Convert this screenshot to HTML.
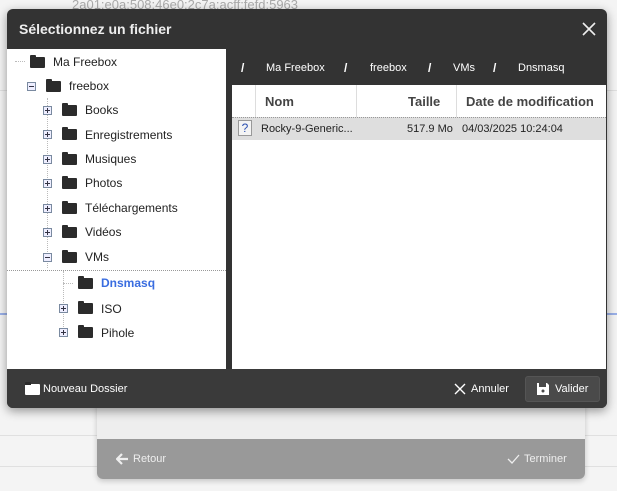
<!DOCTYPE html>
<html><head><meta charset="utf-8"><style>
*{margin:0;padding:0;box-sizing:border-box}
body{width:617px;height:491px;overflow:hidden;background:#f4f4f4;font-family:"Liberation Sans",sans-serif;position:relative}
.a{position:absolute}
.t{font-size:12px;color:#222;white-space:nowrap}
.f{position:absolute;width:15px;height:11px;background:#2b2b2b;border-radius:1px}
.f:before{content:"";position:absolute;left:0;top:-2px;width:6px;height:3px;background:#2b2b2b;border-radius:1px 1px 0 0}
.x{position:absolute;width:9px;height:9px;border:1px solid #7a8aa0;background:#eef;font-size:0}
.x:before{content:"";position:absolute;left:1px;top:3px;width:5px;height:1px;background:#334}
.x.p:after{content:"";position:absolute;left:3px;top:1px;width:1px;height:5px;background:#334}
.w{color:#fff;font-size:12px;white-space:nowrap}
</style></head><body>
<div class="a" style="left:72px;top:-3px;color:#aaa;font-size:13px">2a01:e0a:508:46e0:2c7a:acff:fefd:5963</div>
<div class="a" style="left:0;top:90px;width:617px;height:1px;background:#e0e0e0"></div>
<div class="a" style="left:0;top:313px;width:617px;height:2px;background:#9ab0e8"></div>
<div class="a" style="left:0;top:435px;width:617px;height:1px;background:#e0e0e0"></div>
<div class="a" style="left:0;top:466px;width:617px;height:1px;background:#e0e0e0"></div>
<div class="a" style="left:97px;top:400px;width:488px;height:79px;background:#eee;border-radius:0 0 6px 6px;box-shadow:0 2px 6px rgba(0,0,0,.2)"></div>
<div class="a" style="left:97px;top:439px;width:488px;height:40px;background:#999;border-radius:0 0 6px 6px"></div>
<svg class="a" style="left:116px;top:453px" width="13" height="12"><path d="M6 1L1 6L6 11M1 6H12" stroke="#eee" stroke-width="2.2" fill="none"/></svg>
<div class="a w" style="left:133px;top:453px;color:#eee;font-size:11px">Retour</div>
<svg class="a" style="left:507px;top:453px" width="13" height="12"><path d="M1 6L5 10L12 2" stroke="#eee" stroke-width="1.3" fill="none"/></svg>
<div class="a w" style="left:524px;top:453px;color:#eee;font-size:11px">Terminer</div>

<div class="a" style="left:7px;top:9px;width:600px;height:399px;background:#333;border-radius:6px;box-shadow:0 3px 10px rgba(0,0,0,.4)"></div>
<div class="a" style="left:19px;top:21px;color:#eee;font-size:14px;font-weight:bold">Sélectionnez un fichier</div>
<svg class="a" style="left:581px;top:21px" width="16" height="16"><path d="M2 2L14 14M14 2L2 14" stroke="#eee" stroke-width="1.6"/></svg>

<div class="a" style="left:7px;top:49px;width:219px;height:320px;background:#fff"></div>
<div class="a" style="left:232px;top:85px;width:374px;height:284px;background:#fff"></div>
<div class="a" style="left:232px;top:49px;width:374px;height:36px;background:#333"></div>
<div class="a w" style="left:241px;top:61px;font-weight:bold">/</div>
<div class="a w" style="left:266px;top:62px;font-size:11px">Ma Freebox</div>
<div class="a w" style="left:344px;top:61px;font-weight:bold">/</div>
<div class="a w" style="left:370px;top:62px;font-size:11px">freebox</div>
<div class="a w" style="left:428px;top:61px;font-weight:bold">/</div>
<div class="a w" style="left:453px;top:62px;font-size:11px">VMs</div>
<div class="a w" style="left:493px;top:61px;font-weight:bold">/</div>
<div class="a w" style="left:518px;top:62px;font-size:11px">Dnsmasq</div>
<div class="a" style="left:255px;top:85px;width:1px;height:32px;background:#ddd"></div>
<div class="a" style="left:356px;top:85px;width:1px;height:32px;background:#ddd"></div>
<div class="a" style="left:456px;top:85px;width:1px;height:32px;background:#ddd"></div>
<div class="a t" style="left:265px;top:94px;font-weight:bold;font-size:13px;color:#444">Nom</div>
<div class="a t" style="left:408px;top:94px;font-weight:bold;font-size:13px;color:#444">Taille</div>
<div class="a t" style="left:466px;top:94px;font-weight:bold;font-size:13px;color:#444">Date de modification</div>
<div class="a" style="left:232px;top:117px;width:374px;height:23px;background:#dedede;border-top:1px dotted #999"></div>
<div class="a" style="left:238px;top:120px;width:14px;height:16px;background:#f4f4f4;border:1px solid #999;color:#2a4fb0;font-size:12px;text-align:center;line-height:14px">?</div>
<div class="a t" style="left:261px;top:123px;font-size:11px">Rocky-9-Generic...</div>
<div class="a t" style="left:407px;top:123px;font-size:11px">517.9 Mo</div>
<div class="a t" style="left:462px;top:123px;font-size:11px">04/03/2025 10:24:04</div>

<div class="a" style="left:15px;top:61px;width:10px;border-bottom:1px dotted #bbb"></div>
<div class="f" style="left:30px;top:57px"></div><div class="a t" style="left:53px;top:55px">Ma Freebox</div>
<div class="x" style="left:27px;top:82px"></div><div class="f" style="left:46px;top:81px"></div><div class="a t" style="left:69px;top:79px">freebox</div>
<div class="a" style="left:47px;top:98px;height:170px;border-left:1px dotted #bbb"></div>
<div class="x p" style="left:43px;top:106px"></div><div class="f" style="left:62px;top:105px"></div><div class="a t" style="left:85px;top:103px">Books</div>
<div class="x p" style="left:43px;top:130px"></div><div class="f" style="left:62px;top:129px"></div><div class="a t" style="left:85px;top:128px">Enregistrements</div>
<div class="x p" style="left:43px;top:155px"></div><div class="f" style="left:62px;top:154px"></div><div class="a t" style="left:85px;top:152px">Musiques</div>
<div class="x p" style="left:43px;top:179px"></div><div class="f" style="left:62px;top:178px"></div><div class="a t" style="left:85px;top:176px">Photos</div>
<div class="x p" style="left:43px;top:204px"></div><div class="f" style="left:62px;top:203px"></div><div class="a t" style="left:85px;top:201px">Téléchargements</div>
<div class="x p" style="left:43px;top:228px"></div><div class="f" style="left:62px;top:227px"></div><div class="a t" style="left:85px;top:225px">Vidéos</div>
<div class="x" style="left:43px;top:253px"></div><div class="f" style="left:62px;top:252px"></div><div class="a t" style="left:85px;top:250px">VMs</div>
<div class="a" style="left:7px;top:270px;width:219px;border-top:1px dotted #999"></div>
<div class="a" style="left:63px;top:271px;height:66px;border-left:1px dotted #bbb"></div>
<div class="a" style="left:63px;top:283px;width:10px;border-bottom:1px dotted #bbb"></div>
<div class="f" style="left:78px;top:278px"></div><div class="a t" style="left:101px;top:276px;color:#3a6de0;font-weight:bold">Dnsmasq</div>
<div class="x p" style="left:59px;top:304px"></div><div class="f" style="left:78px;top:303px"></div><div class="a t" style="left:101px;top:302px">ISO</div>
<div class="x p" style="left:59px;top:328px"></div><div class="f" style="left:78px;top:327px"></div><div class="a t" style="left:101px;top:326px">Pihole</div>

<div class="a" style="left:7px;top:369px;width:600px;height:39px;background:#3a3a3a;border-radius:0 0 6px 6px"></div>
<div class="f" style="left:25px;top:384px;background:#fff"></div>
<div class="a w" style="left:43px;top:383px;font-size:11px">Nouveau Dossier</div>
<svg class="a" style="left:454px;top:383px" width="12" height="12"><path d="M1 1L11 11M11 1L1 11" stroke="#fff" stroke-width="1.4"/></svg>
<div class="a w" style="left:471px;top:383px;font-size:11px">Annuler</div>
<div class="a" style="left:525px;top:376px;width:75px;height:26px;background:#4a4a4a;border:1px solid #555;border-radius:3px"></div>
<svg class="a" style="left:537px;top:382px" width="12" height="13"><path d="M0 1h10l2 2v10H0z" fill="#fff"/><rect x="2" y="1" width="7" height="4" fill="#4a4a4a"/><circle cx="6" cy="9" r="1.5" fill="#4a4a4a"/></svg>
<div class="a w" style="left:555px;top:383px;font-size:11px">Valider</div>
</body></html>
